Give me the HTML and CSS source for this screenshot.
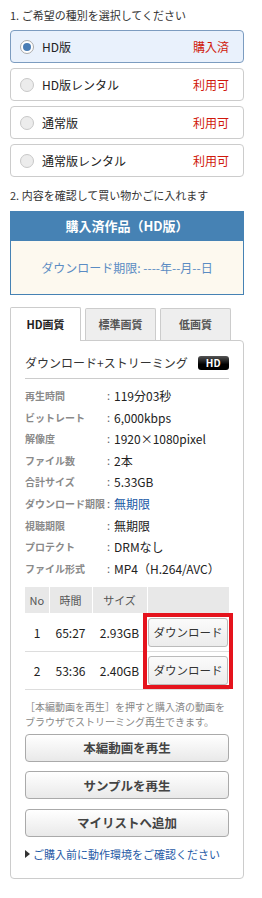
FILE: index.html
```html
<!DOCTYPE html>
<html lang="ja">
<head>
<meta charset="utf-8">
<title>購入</title>
<link rel="stylesheet" href="styles.css">
</head>
<body>
<div class="wrap">
  <p class="step step1">1. ご希望の種別を選択してください</p>
  <ul class="options">
    <li class="opt selected"><span class="radio"></span><span class="name">HD版</span><span class="status">購入済</span></li>
    <li class="opt"><span class="radio"></span><span class="name">HD版レンタル</span><span class="status">利用可</span></li>
    <li class="opt"><span class="radio"></span><span class="name">通常版</span><span class="status">利用可</span></li>
    <li class="opt"><span class="radio"></span><span class="name">通常版レンタル</span><span class="status">利用可</span></li>
  </ul>
  <p class="step step2">2. 内容を確認して買い物かごに入れます</p>
  <div class="purchased">
    <div class="ph">購入済作品（HD版）</div>
    <div class="pb">ダウンロード期限: ----年--月--日</div>
  </div>
  <div class="tabs">
    <div class="tab active">HD画質</div>
    <div class="tab">標準画質</div>
    <div class="tab">低画質</div>
  </div>
  <div class="panel">
    <div class="ptitle"><span>ダウンロード+ストリーミング</span><span class="hd">HD</span></div>
    <div class="spec">
      <div class="row"><span class="lbl">再生時間</span><span class="colon">:</span><span class="val">119分03秒</span></div>
      <div class="row"><span class="lbl">ビットレート</span><span class="colon">:</span><span class="val">6,000kbps</span></div>
      <div class="row"><span class="lbl">解像度</span><span class="colon">:</span><span class="val">1920×1080pixel</span></div>
      <div class="row"><span class="lbl">ファイル数</span><span class="colon">:</span><span class="val">2本</span></div>
      <div class="row"><span class="lbl">合計サイズ</span><span class="colon">:</span><span class="val">5.33GB</span></div>
      <div class="row"><span class="lbl">ダウンロード期限</span><span class="colon">:</span><span class="val link">無期限</span></div>
      <div class="row"><span class="lbl">視聴期限</span><span class="colon">:</span><span class="val">無期限</span></div>
      <div class="row"><span class="lbl">プロテクト</span><span class="colon">:</span><span class="val">DRMなし</span></div>
      <div class="row"><span class="lbl">ファイル形式</span><span class="colon">:</span><span class="val">MP4（H.264/AVC）</span></div>
    </div>
    <div class="files">
      <table>
        <colgroup><col class="c1"><col class="c2"><col class="c3"><col class="c4"></colgroup>
        <thead><tr><th>No</th><th>時間</th><th>サイズ</th><th></th></tr></thead>
        <tbody>
          <tr><td>1</td><td>65:27</td><td>2.93GB</td><td><button class="dl">ダウンロード</button></td></tr>
          <tr><td>2</td><td>53:36</td><td>2.40GB</td><td><button class="dl">ダウンロード</button></td></tr>
        </tbody>
      </table>
      <div class="hl"></div>
    </div>
    <p class="note">［本編動画を再生］を押すと購入済の動画をブラウザでストリーミング再生できます。</p>
    <button class="big">本編動画を再生</button>
    <button class="big">サンプルを再生</button>
    <button class="big">マイリストへ追加</button>
    <p class="env"><span class="tri"></span>ご購入前に動作環境をご確認ください</p>
  </div>
</div>
</body>
</html>
```
FILE: styles.css
```css
* { box-sizing: border-box; }
body {
  margin: 0;
  font-family: "Noto Sans CJK JP", "Noto Sans", sans-serif;
  color: #333;
  background: #fff;
}
.wrap { width: 234px; margin-left: 10px; padding-bottom: 19px; }
.step { margin: 0; font-size: 11px; line-height: 16px; color: #333; }
.step1 { padding-top: 7px; }
.step2 { margin-top: 10px; }
.options {
  list-style: none; margin: 7px 0 0; padding: 0;
  display: flex; flex-direction: column; gap: 5px;
}
.opt {
  height: 33px; border: 1px solid #ccc; border-radius: 4px;
  display: flex; align-items: center;
  padding: 0 14px 0 9px; font-size: 12px; color: #222; background: #fff;
}
.opt.selected { background: #e9f1fc; border-color: #7c9cc0; }
.radio {
  width: 14px; height: 14px; border-radius: 50%;
  border: 1px solid #c8c8c8; background: #ececec; flex: none;
  display: flex; align-items: center; justify-content: center;
}
.selected .radio { background: #fff; border-color: #aaa; }
.selected .radio::after {
  content: ""; width: 8px; height: 8px; border-radius: 50%; background: #4a7db5;
}
.name { margin-left: 8px; line-height: 16px; }
.status { margin-left: auto; color: #d0180b; line-height: 16px; }
.purchased { margin-top: 8px; }
.ph {
  height: 30px; background: #4682b4; color: #fff; font-weight: bold;
  font-size: 13px; line-height: 30px; text-align: center;
}
.pb {
  height: 54px; background: #fdf9ef; border: 1px solid #4682b4; border-top: 0;
  color: #5b8cc3; font-size: 12px; line-height: 53px; text-align: center;
}
.tabs { margin-top: 12px; display: flex; align-items: flex-end; gap: 4px; position: relative; z-index: 1; }
.tab {
  width: 71px; height: 32px; border: 1px solid #ccc; border-bottom: 0;
  background: #eee; color: #555; font-size: 11px; font-weight: bold;
  line-height: 31px; text-align: center; border-radius: 2px 2px 0 0;
}
.tab.active { height: 34px; background: #fff; color: #222; margin-bottom: -1px; line-height: 33px; }
.panel {
  border: 1px solid #ccc; border-radius: 0 4px 4px 4px;
  padding: 12px 14px 15px 14px;
}
.ptitle {
  display: flex; align-items: center; font-size: 12px; line-height: 20px; color: #333;
  padding-bottom: 5px; border-bottom: 1px solid #ccc;
}
.hd {
  margin-left: 10px; width: 31px; height: 14px; border-radius: 3px;
  background: linear-gradient(#555, #000 60%); color: #fff;
  font-size: 10px; font-weight: bold; line-height: 14px; text-align: center;
}
.spec { margin-top: 6px; }
.row { display: grid; grid-template-columns: 82px 7px 1fr; line-height: 21.6px; }
.lbl { font-size: 10px; font-weight: bold; color: #8a8a8a; white-space: nowrap; }
.colon { font-size: 11px; color: #666; }
.val { font-size: 12px; color: #222; }
.val.link { color: #1a5aa6; }
.files { position: relative; margin-top: 8px; }
table { width: 204px; border-collapse: collapse; table-layout: fixed; }
.c1 { width: 24px; } .c2 { width: 43px; } .c3 { width: 55px; } .c4 { width: 82px; }
th {
  height: 26px; padding: 0; background: #e8e8e8; color: #555;
  font-size: 11px; font-weight: normal; border-right: 1px solid #fff; line-height: 26px;
}
th:last-child { border-right: 0; }
td {
  height: 38px; padding: 0; text-align: center; font-size: 12px; color: #222;
  border-bottom: 1px solid #ddd;
}
.dl {
  width: 80px; height: 29px; margin: 0 auto; display: block;
  border: 1px solid #bbb; border-radius: 3px;
  background: linear-gradient(#fbfbfb, #ececec);
  font-family: inherit; font-size: 11.5px; color: #333; padding: 0;
}
.hl {
  position: absolute; left: 118px; top: 26px; width: 90px; height: 76px;
  border: 4px solid #e5131d;
}
.note { margin: 9px 0 0; font-size: 10px; line-height: 15px; color: #888; }
.big {
  display: block; width: 100%; height: 28px; margin-top: 9.5px;
  border: 1px solid #aaa; border-radius: 4px;
  background: linear-gradient(#fff, #e9e9e9);
  font-family: inherit; font-size: 12.5px; font-weight: bold; color: #444; padding: 0;
}
.note + .big { margin-top: 5px; }
.env { margin: 8px 0 0; font-size: 11px; line-height: 18px; color: #1f5aa6; display: flex; align-items: center; }
.tri {
  width: 0; height: 0; border-left: 5px solid #333;
  border-top: 4px solid transparent; border-bottom: 4px solid transparent;
  margin-right: 3px;
}
```
